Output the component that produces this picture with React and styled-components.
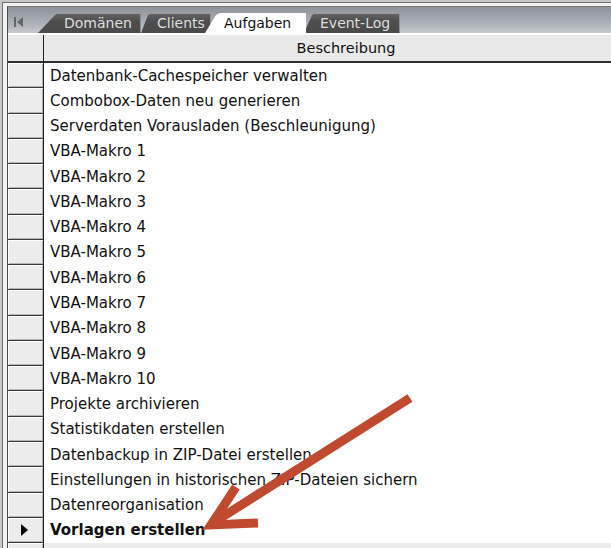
import React from "react";
import styled, { createGlobalStyle } from "styled-components";

const rows = [
  "Datenbank-Cachespeicher verwalten",
  "Combobox-Daten neu generieren",
  "Serverdaten Vorausladen (Beschleunigung)",
  "VBA-Makro 1",
  "VBA-Makro 2",
  "VBA-Makro 3",
  "VBA-Makro 4",
  "VBA-Makro 5",
  "VBA-Makro 6",
  "VBA-Makro 7",
  "VBA-Makro 8",
  "VBA-Makro 9",
  "VBA-Makro 10",
  "Projekte archivieren",
  "Statistikdaten erstellen",
  "Datenbackup in ZIP-Datei erstellen",
  "Einstellungen in historischen ZIP-Dateien sichern",
  "Datenreorganisation",
  "Vorlagen erstellen",
];

const tabs = [
  { label: "Domänen", width: 103, shift: 0, slant: 19, pad: 26 },
  { label: "Clients", width: 70, shift: 0, slant: 9, pad: 16 },
  { label: "Aufgaben", width: 101, shift: -6, slant: 13, pad: 19, active: true },
  { label: "Event-Log", width: 96, shift: -2, slant: 10, pad: 16 },
];

export default function App() {
  return (
    <>
      <Global />
      <Window>
        <Inner>
          <TabStrip>
            <NavSlot>
              <svg width="9" height="10" viewBox="0 0 9 10">
                <rect x="0" y="0" width="2" height="10" fill="#666" />
                <path d="M9 0 L3 5 L9 10 Z" fill="#666" />
              </svg>
            </NavSlot>
            {tabs.map((t) => (
              <Tab
                key={t.label}
                $width={t.width}
                $shift={t.shift}
                $slant={t.slant}
                $pad={t.pad}
                $active={t.active}
              >
                {t.label}
              </Tab>
            ))}
          </TabStrip>

          <Sheet>
            <HeaderRow>
              <HeaderSelector />
              <HeaderCell>Beschreibung</HeaderCell>
            </HeaderRow>
            {rows.map((r, i) => {
              const current = i === rows.length - 1;
              return (
                <Row key={r}>
                  <Selector>{current && <Pointer />}</Selector>
                  <Cell $bold={current}>{r}</Cell>
                </Row>
              );
            })}
            <FooterRow>
              <Selector />
              <FooterCell />
            </FooterRow>
          </Sheet>
        </Inner>

        <Arrow width="611" height="548" viewBox="0 0 611 548">
          <line
            x1="410"
            y1="398"
            x2="216"
            y2="521"
            stroke="#bf4a30"
            strokeWidth="9"
          />
          <polyline
            points="236,487 211,525 258,523"
            fill="none"
            stroke="#bf4a30"
            strokeWidth="9"
            strokeLinejoin="miter"
          />
        </Arrow>
      </Window>
    </>
  );
}

// Styled components
const Global = createGlobalStyle`
  html, body {
    margin: 0;
    padding: 0;
    background: #ffffff;
    overflow: hidden;
  }
`;

const Window = styled.div`
  position: relative;
  width: 611px;
  height: 548px;
  overflow: hidden;
  box-sizing: border-box;
  padding: 6px 0 0 7px;
  background: #f2f2f2;
  box-shadow: inset 2px 2px 0 #c8c8c8, inset 3px 3px 0 #6e6e6e;
  font-family: "DejaVu Sans", Verdana, sans-serif;
`;

const Inner = styled.div`
  border-top: 1px solid #7a7a7a;
  border-left: 1px solid #4a4a4a;
  height: 100%;
  background: #ffffff;
`;

const TabStrip = styled.div`
  display: flex;
  align-items: flex-end;
  height: 26px;
  background: linear-gradient(#8d929b, #b1b5bc 70%, #c6c9ce);
`;

const NavSlot = styled.div`
  width: 30px;
  box-sizing: border-box;
  padding-left: 6px;
  align-self: center;
  display: flex;
  margin-top: 3px;
`;

const Tab = styled.div`
  position: relative;
  z-index: ${(p) => (p.$active ? 2 : 1)};
  width: ${(p) => p.$width}px;
  margin-left: ${(p) => p.$shift}px;
  height: 20px;
  box-sizing: border-box;
  padding-left: ${(p) => p.$pad}px;
  display: flex;
  align-items: center;
  font-size: 14px;
  white-space: nowrap;
  color: ${(p) => (p.$active ? "#111111" : "#dedede")};
  background: ${(p) =>
    p.$active ? "#ffffff" : "linear-gradient(#666666, #4e4e4e 40%, #4a4a4a)"};
  box-shadow: ${(p) =>
    p.$active ? "none" : "inset 0 1px 0 #9a9a9a, inset -1px 0 0 #8e8e8e"};
  clip-path: polygon(
    0 100%,
    ${(p) => p.$slant - 2}px 2px,
    ${(p) => p.$slant + 2}px 0,
    100% 0,
    100% 100%
  );
`;

const Sheet = styled.div`
  display: flex;
  flex-direction: column;
`;

const HeaderRow = styled.div`
  display: flex;
  height: 30px;
  box-sizing: border-box;
  border-top: 2px solid #ffffff;
  border-bottom: 2px solid #2e2e2e;
  background: #e9e9e9;
`;

const HeaderSelector = styled.div`
  width: 36px;
  flex: none;
  box-sizing: border-box;
  border-right: 1px solid #1e1e1e;
`;

const HeaderCell = styled.div`
  width: 604px;
  flex: none;
  display: flex;
  align-items: center;
  justify-content: center;
  font-size: 14.5px;
  color: #111111;
`;

const Row = styled.div`
  display: flex;
  height: 25.28px;
`;

const Selector = styled.div`
  width: 36px;
  flex: none;
  box-sizing: border-box;
  border-right: 1px solid #1e1e1e;
  border-bottom: 1px solid #3a3a3a;
  background: #ececec;
  box-shadow: inset 1px 1px 0 #ffffff, inset -1px -1px 0 #b4b4b4;
  display: flex;
  align-items: center;
  justify-content: center;
`;

const Pointer = styled.span`
  width: 0;
  height: 0;
  margin-left: -2px;
  border-top: 6px solid transparent;
  border-bottom: 6px solid transparent;
  border-left: 7px solid #000000;
`;

const Cell = styled.div`
  flex: 1;
  display: flex;
  align-items: center;
  padding-left: 6px;
  font-size: 15px;
  font-weight: ${(p) => (p.$bold ? 700 : 400)};
  color: #111111;
  white-space: nowrap;
  background: #ffffff;
`;

const FooterRow = styled.div`
  display: flex;
  height: 12px;
`;

const FooterCell = styled.div`
  flex: 1;
  background: #ececec;
`;

const Arrow = styled.svg`
  position: absolute;
  left: 0;
  top: 0;
  pointer-events: none;
`;
